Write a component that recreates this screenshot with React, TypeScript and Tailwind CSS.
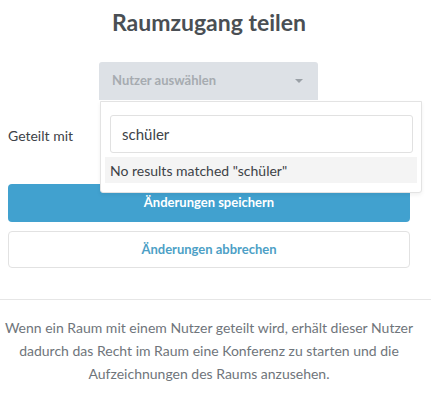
import React from 'react';

export default function App() {
  return (
    <div className="w-[431px] h-[403px] bg-white overflow-hidden font-['Lato','Liberation_Sans',sans-serif] text-[#495057]">
      {/* Title */}
      <h2 className="w-[418px] pt-[8px] text-center text-[23px] leading-[29px] font-bold text-[#4a4f54]">Raumzugang teilen</h2>

      <div className="px-2">
        {/* Share row */}
        <div className="flex h-[122px] mt-[25px]">
          <label className="w-[91px] pt-[64px] text-[14px] leading-[20px] text-[#3d4247]">Geteilt mit</label>
          <div className="relative w-[219px]">
            <button className="w-full h-[38px] flex items-center justify-between pl-[13px] pr-[15px] bg-[#dde1e6] rounded-t-[3px] text-[13px] font-bold text-[#a6abb0]">
              <span>Nutzer auswählen</span>
              <span className="w-0 h-0 border-l-[4px] border-r-[4px] border-t-[4px] border-l-transparent border-r-transparent border-t-[#9aa0a6]" />
            </button>

            {/* Open dropdown */}
            <div className="absolute left-[1px] top-[39px] w-[322px] h-[92px] bg-white border border-[#e3e3e3] rounded-b-[3px] shadow-[0_2px_4px_rgba(0,0,0,0.06)] z-10">
              <div className="pl-[9px] pr-[8px] pt-[13px]">
                <div className="h-[38px] flex items-center px-[11px] border border-[#e1e1e1] rounded-[3px] text-[15px] text-[#3d4247]">schüler</div>
              </div>
              <div className="mx-[4px] mt-[4px] h-[26px] flex items-center px-[5px] bg-[#f4f4f4] text-[14px] text-[#3d4247]">
                No results matched "schüler"
              </div>
            </div>
          </div>
        </div>

        {/* Buttons */}
        <div className="w-[402px]">
          <button className="w-full h-[38px] bg-[#41a1cf] rounded-[4px] text-white text-[13px] font-bold">Änderungen speichern</button>
          <button className="w-full h-[37px] mt-[9px] bg-white border border-[#e2e2e2] rounded-[4px] text-[#4d9fc6] text-[13px] font-bold">Änderungen abbrechen</button>
        </div>
      </div>

      <hr className="mt-[31px] border-t border-[#e6e6e6]" />

      <p className="w-[418px] pt-[16px] text-center text-[14px] leading-[23px] text-[#6f757b]">
        Wenn ein Raum mit einem Nutzer geteilt wird, erhält dieser Nutzer dadurch das Recht im Raum eine Konferenz zu starten und die Aufzeichnungen des Raums anzusehen.
      </p>
    </div>
  );
}
